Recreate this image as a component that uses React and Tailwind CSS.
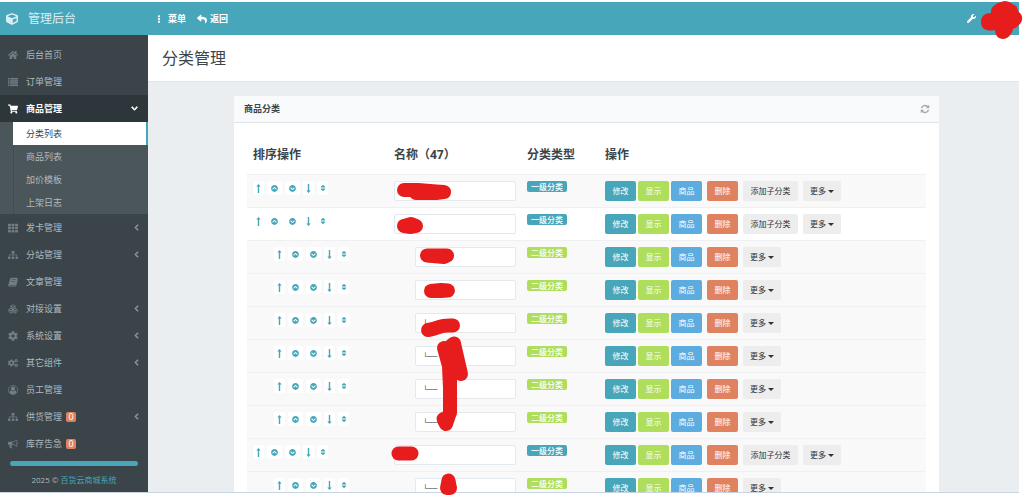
import React from 'react';
import { Boxes } from 'lucide-react';
import {
  FaHome,
  FaShoppingCart,
  FaTh,
  FaSitemap,
  FaCog,
  FaCogs,
  FaCube,
  FaEllipsisV,
  FaReply,
  FaWrench,
  FaChevronDown,
  FaChevronLeft,
  FaChevronCircleUp,
  FaChevronCircleDown,
  FaSort,
} from 'react-icons/fa';

const ListIcon = ({ className }) => (
  <svg viewBox="0 0 14 14" className={className} fill="currentColor">
    <path d="M0 1.500h2v2H0zM3 1.500h11v2H3zM0 4.500h2v2H0zM3 4.500h11v2H3zM0 7.500h2v2H0zM3 7.500h11v2H3zM0 10.500h2v2H0zM3 10.500h11v2H3z" />
  </svg>
);

const BookIcon = ({ className }) => (
  <svg viewBox="0 0 14 14" className={className} fill="currentColor">
    <path
      fillRule="evenodd"
      d="M4.800 1H12.600Q13.800 1.200 13.400 2.500L11 10.800Q10.700 11.500 9.900 11.500H2Q1.400 11.700 2 12.200H10.600L13.300 4Q14 4.300 13.800 5L11.400 12.600Q11 13.400 10.200 13.400H2Q.2 13.300.3 11.200L3.200 2.200Q3.600 1 4.800 1ZM5.200 3.400 5 4.200H10.800L11 3.400ZM4.500 5.600 4.300 6.400H10L10.300 5.600Z"
    />
  </svg>
);

const UserIcon = ({ className }) => (
  <svg viewBox="0 0 1792 1792" className={className} fill="currentColor">
    <circle cx="896" cy="896" r="832" fill="none" stroke="currentColor" strokeWidth="128" />
    <path d="M1523 1339q-22-155-87.500-257.500t-184.500-118.500q-67 74-159.500 115.500t-195.500 41.500-195.500-41.500-159.500-115.500q-119 16-184.500 118.500t-87.500 257.500q106 150 271 237.500t356 87.500 356-87.500 271-237.500zm-243-699q0-159-112.500-271.500t-271.500-112.500-271.500 112.500-112.500 271.500 112.500 271.500 271.500 112.500 271.500-112.500 112.500-271.500z" />
  </svg>
);

const BullhornIcon = ({ className }) => (
  <svg viewBox="0 0 1792 1792" className={className} fill="currentColor">
    <path d="M1664 640q53 0 90.500 37.500t37.500 90.500-37.500 90.500-90.500 37.500v384q0 52-38 90t-90 38q-417-347-812-380-58 19-91 66t-31 100.500 40 92.500q-20 33-23 65.500t6 58 33.500 55 48 50 61.500 50.500q-29 58-111.500 83t-168.500 11.500-132-55.500q-7-23-29.500-87.500t-32-94.500-23-89-15-101 3.500-98.500 22-110.500h-122q-66 0-113-47t-47-113v-192q0-66 47-113t113-47h480q435 0 896-384 52 0 90 38t38 90v384zm-128 604v-954q-394 302-768 343v270q377 42 768 341z" />
  </svg>
);

const RefreshIcon = ({ className }) => (
  <svg viewBox="0 0 1792 1792" className={className} fill="currentColor">
    <path d="M1639 1056q0 5-1 7-64 268-268 434.500t-478 166.500q-146 0-282.500-55t-243.500-157l-129 129q-19 19-45 19t-45-19-19-45v-448q0-26 19-45t45-19h448q26 0 45 19t19 45-19 45l-137 137q71 66 161 102t187 36q134 0 250-65t186-179q11-17 53-117 8-23 30-23h192q13 0 22.500 9.500t9.500 22.500zm25-800v448q0 26-19 45t-45 19h-448q-26 0-45-19t-19-45 19-45l138-138q-148-137-349-137-134 0-250 65t-186 179q-11 17-53 117-8 23-30 23h-199q-13 0-22.500-9.500t-9.500-22.500v-7q65-268 270-434.500t480-166.500q146 0 284 55.500t245 156.500l130-129q19-19 45-19t45 19 19 45z" />
  </svg>
);

const LongArrow = ({ className }) => (
  <svg viewBox="0 0 5 9" className={className}>
    <path d="M2.500 0 4.700 2.600H3.200V9H1.800V2.600H.3z" fill="currentColor" />
  </svg>
);

const Caret = ({ className }) => (
  <svg viewBox="0 0 6 3" className={className}>
    <path d="M0 0H6L3 3z" fill="currentColor" />
  </svg>
);

const topMenu = [
  { label: '后台首页', icon: FaHome },
  { label: '订单管理', icon: ListIcon },
];

const subMenu = ['分类列表', '商品列表', '加价模板', '上架日志'];

const restMenu = [
  { label: '发卡管理', icon: FaTh, more: true },
  { label: '分站管理', icon: FaSitemap, more: true },
  { label: '文章管理', icon: BookIcon },
  { label: '对接设置', icon: Boxes, more: true },
  { label: '系统设置', icon: FaCog, more: true },
  { label: '其它组件', icon: FaCogs, more: true },
  { label: '员工管理', icon: UserIcon },
  { label: '供货管理', icon: FaSitemap, more: true, badge: '0' },
  { label: '库存告急', icon: BullhornIcon, badge: '0' },
];

const levels = [1, 1, 2, 2, 2, 2, 2, 2, 1, 2];

const MenuItem = ({ label, icon: Icon, more, badge }) => (
  <li>
    <a href="#" className="flex h-[27px] items-center pr-2 pl-2 text-[#b0b9bd]">
      <Icon className="size-2.5 text-[#727e84]" />
      <span className="ml-2">{label}</span>
      {badge && (
        <span className="ml-1 flex h-2.5 w-2.5 items-center justify-center rounded-xs bg-[#df8260] text-[9px] leading-none text-white">
          {badge}
        </span>
      )}
      {more && (
        <FaChevronLeft className="ml-auto size-[7px] text-[#8b969b]" stroke="currentColor" strokeWidth="30" />
      )}
    </a>
  </li>
);

const Sidebar = () => (
  <nav className="w-[148px] shrink-0 bg-[#3a4449] pt-1.5 text-[9px]">
    <ul>
      {topMenu.map((item) => (
        <MenuItem key={item.label} {...item} />
      ))}
      <li>
        <a href="#" className="flex h-[27px] items-center bg-[#2d363a] pr-2.5 pl-2 font-bold text-white">
          <FaShoppingCart className="size-2.5" />
          <span className="ml-2">商品管理</span>
          <FaChevronDown className="ml-auto size-[7px]" stroke="currentColor" strokeWidth="50" />
        </a>
        <ul className="bg-[#4b565b] pl-[13px]">
          {subMenu.map((label, i) => (
            <li key={label}>
              <a
                href="#"
                className={
                  i === 0
                    ? 'flex h-[23px] items-center border-r-2 border-[#47a6ba] bg-white pl-[13px] text-[#3a4449]'
                    : 'flex h-[23px] items-center border-l border-[#414b50] pl-3 text-[#b0b9bd]'
                }
              >
                {label}
              </a>
            </li>
          ))}
        </ul>
      </li>
      {restMenu.map((item) => (
        <MenuItem key={item.label} {...item} />
      ))}
    </ul>
    <div className="mx-2.5 mt-1 h-[5px] rounded-full bg-[#47a6ba]" />
    <p className="mt-2 text-center text-[8px] leading-3 text-[#b0b9bd]">
      2025 © <a href="#" className="text-[#47a6ba]">百货云商城系统</a>
    </p>
  </nav>
);

const sortClass = 'flex h-3.5 items-center justify-center rounded-xs bg-white';

const SortButtons = () => (
  <div className="flex gap-[3px] text-[#47a6ba]">
    <button aria-label="置顶" className={`${sortClass} w-[11px]`}>
      <LongArrow className="h-[9px] w-[5px]" />
    </button>
    <button aria-label="上移" className={`${sortClass} w-[15px]`}>
      <FaChevronCircleUp className="size-[7px]" />
    </button>
    <button aria-label="下移" className={`${sortClass} w-[15px]`}>
      <FaChevronCircleDown className="size-[7px]" />
    </button>
    <button aria-label="置底" className={`${sortClass} w-[11px]`}>
      <LongArrow className="h-[9px] w-[5px] rotate-180" />
    </button>
    <button aria-label="排序" className={`${sortClass} w-[11px]`}>
      <FaSort className="size-2" />
    </button>
  </div>
);

const btn = 'h-5 rounded-xs text-[8px]';

const Row = ({ level, index }) => {
  const child = level === 2;
  return (
    <tr className={index === 1 ? 'bg-white' : 'bg-[#f9f9f9]'}>
      <td className={`border-t border-[#eef0f2] pt-1.5 align-top ${child ? 'pl-[27px]' : 'pl-1.5'}`}>
        <SortButtons />
      </td>
      <td className={`border-t border-[#eef0f2] py-1.5 pr-[5px] align-top ${child ? 'pl-[27px]' : 'pl-1.5'}`}>
        <input
          type="text"
          aria-label="分类名称"
          defaultValue={child ? '└──' : ''}
          className="block h-5 w-full rounded-xs border border-[#e4e9ee] bg-white px-[7px] font-['Liberation_Mono',monospace] text-[8px] font-bold text-[#3a4449]"
        />
      </td>
      <td className="border-t border-[#eef0f2] pt-1.5 pl-1.5 align-top">
        <span
          className={`flex h-[11px] w-10 items-center justify-center rounded-xs text-[8px] font-medium text-white ${
            child ? 'bg-[#afde5c]' : 'bg-[#47a6ba]'
          }`}
        >
          {child ? '二级分类' : '一级分类'}
        </span>
      </td>
      <td className="border-t border-[#eef0f2] py-1.5 pl-1.5 align-top">
        <div className="flex gap-[5px]">
          <div className="flex gap-0.5">
            <button className={`${btn} w-[31px] bg-[#47a6ba] text-white`}>修改</button>
            <button className={`${btn} w-[31px] bg-[#afde5c] text-white`}>显示</button>
            <button className={`${btn} w-[31px] bg-[#5dacdf] text-white`}>商品</button>
          </div>
          <button className={`${btn} w-[31px] bg-[#df8260] text-white`}>删除</button>
          {!child && <button className={`${btn} w-[55px] bg-[#ededed] text-[#333]`}>添加子分类</button>}
          <button className={`${btn} flex w-[38px] items-center justify-center gap-0.5 bg-[#ededed] text-[#333]`}>
            更多
            <Caret className="h-[3px] w-1.5" />
          </button>
        </div>
      </td>
    </tr>
  );
};

// Marker strokes drawn over the private names
const Redactions = () => (
  <svg
    className="pointer-events-none absolute top-0 left-0"
    width="1024"
    height="496"
    fill="none"
    stroke="#e71d1d"
    strokeLinecap="round"
    strokeLinejoin="round"
  >
    <g strokeWidth="14">
      <path d="M404 190H418L436 191.500 444 192 436 193H416" />
      <path d="M404 226 411 224 416 226 411 227z" />
      <path d="M427 255.500H447L444 257z" />
      <path d="M431 291 441 290 448 290.500 441 291z" />
      <path d="M428 330Q434 329 439 327T453 325.500" />
      <path d="M398.500 453.500H411.500" />
      <path d="M444 348 449 366 450 388 450 412" />
      <path d="M446 350 454 343.500 461 374 448 360" />
      <path d="M450 378 450 398" />
      <path d="M443.500 419 446 424 450 412" />
      <path d="M448.500 480.500 447 488 450 488z" />
    </g>
    <path
      d="M1005 1C1009 1 1012 4 1016 6 1018 8 1017 11 1020 13 1024 17 1023 25 1013 29 1012 35 1007 39 1003 39 998 39 995 35 995 30 987 32 981 29 981 22 981 16 985 13 991 13 990 6 998 2 1005 1Z"
      fill="#e71d1d"
      stroke="none"
    />
  </svg>
);

const App = () => {
  return (
    <div className="relative h-screen overflow-hidden bg-white pt-0.5 pr-[5px] pb-[3px] font-['Open_Sans','Noto_Sans_CJK_SC',sans-serif] text-[#3a4449]">
      <div className="flex h-full flex-col overflow-hidden border-b border-[#c9d4e2]">
        {/* Top bar */}
        <header className="flex h-[33px] shrink-0 items-center bg-[#47a6ba] text-[9px] font-semibold text-white">
          <a href="#" className="flex w-[148px] items-center gap-2.5 pl-1.5 text-xs font-normal text-[#d9eef2]">
            <FaCube className="size-3" />
            管理后台
          </a>
          <a href="#" className="flex items-center gap-[5px] pl-[7px]">
            <FaEllipsisV className="size-2" />
            菜单
          </a>
          <a href="#" className="flex items-center gap-[3px] pl-[11px]">
            <FaReply className="size-2.5" />
            返回
          </a>
          <button aria-label="设置" className="mr-[43px] ml-auto">
            <FaWrench className="size-[9px] -scale-x-100 rotate-90" />
          </button>
        </header>

        <div className="flex min-h-0 flex-1">
          <Sidebar />

          <main className="min-w-0 flex-1 overflow-hidden bg-[#eaeef1]">
            <div className="flex h-[47px] items-center border-b border-[#dee5e9] bg-white pl-3.5">
              <h1 className="text-base">分类管理</h1>
            </div>

            <div className="pt-3.5 pr-20 pl-[86px]">
              <section className="bg-white">
                <div className="flex h-[27px] items-center justify-between border-b border-[#dee5e9] bg-[#f9fafc] pr-[9px] pl-2.5">
                  <h2 className="text-[9px] font-bold">商品分类</h2>
                  <button aria-label="刷新" className="text-[#a3abaf]">
                    <RefreshIcon className="size-2.5" />
                  </button>
                </div>

                <div className="p-[13px]">
                  <table className="w-full table-fixed border-separate border-spacing-0">
                    <thead>
                      <tr className="h-[38px] text-left text-xs">
                        <th className="w-[141px] pl-1.5 font-bold">排序操作</th>
                        <th className="w-[133px] pl-1.5 font-bold">名称（47）</th>
                        <th className="w-[78px] pl-1.5 font-bold">分类类型</th>
                        <th className="pl-1.5 font-bold">操作</th>
                      </tr>
                    </thead>
                    <tbody>
                      {levels.map((level, i) => (
                        <Row key={i} level={level} index={i} />
                      ))}
                    </tbody>
                  </table>
                </div>
              </section>
            </div>
          </main>
        </div>
      </div>
      <Redactions />
    </div>
  );
};

export default App;
